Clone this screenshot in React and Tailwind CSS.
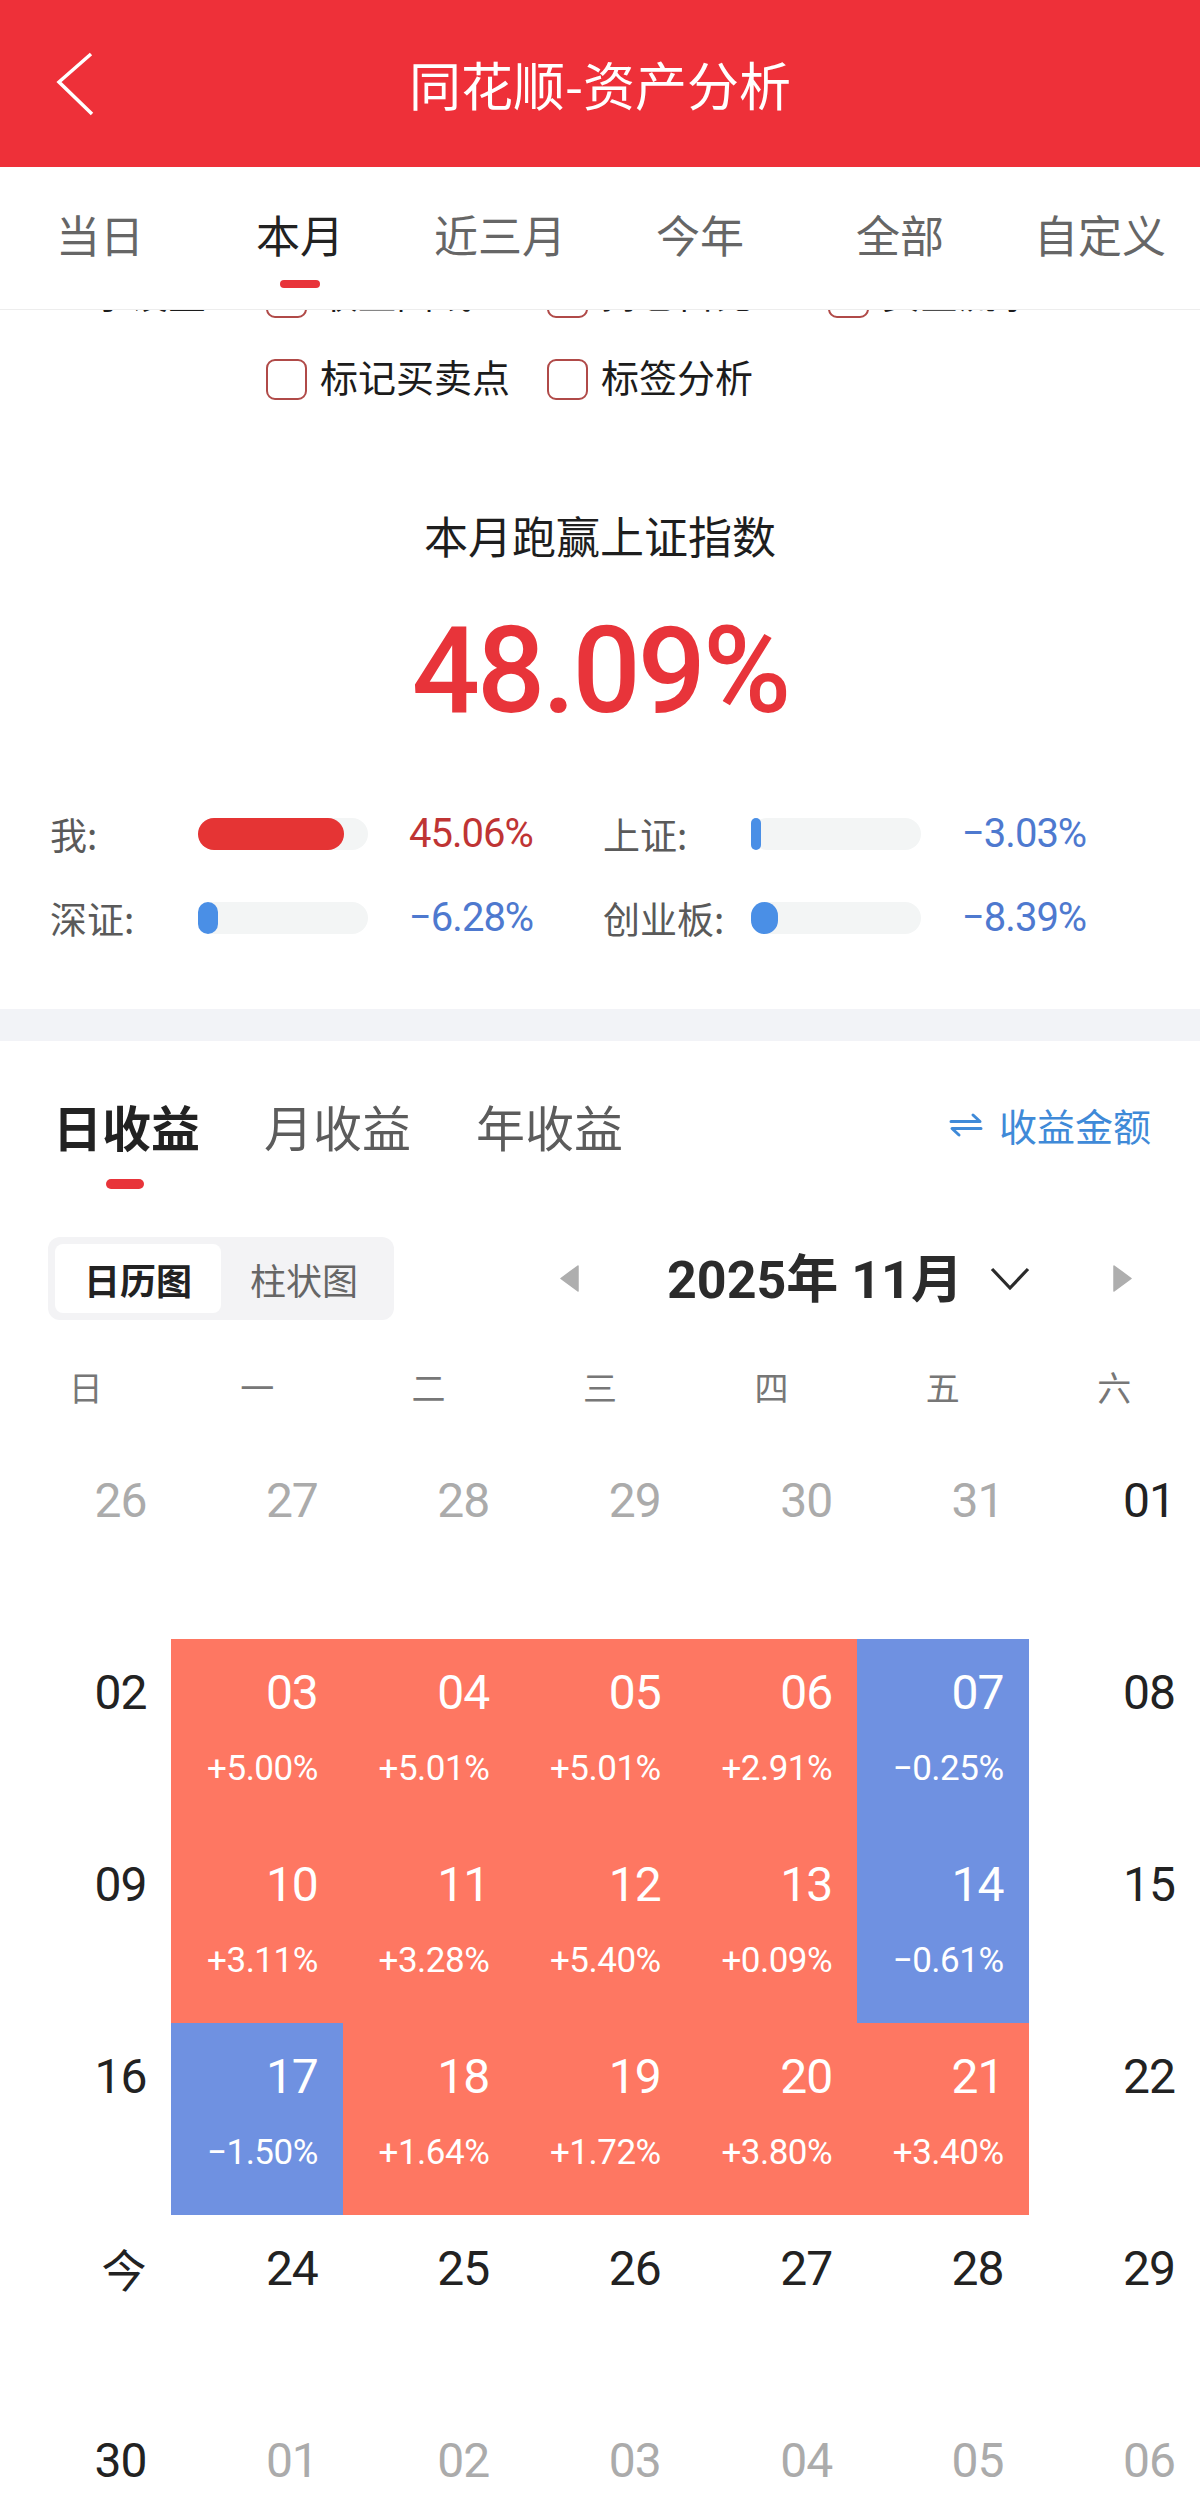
import React from "react";

const CJK = "font-['Noto_Sans_CJK_SC','Noto_Sans',sans-serif]";
const NUM = "font-['Roboto','Noto_Sans_CJK_SC',sans-serif]";

const tabs = ["当日", "本月", "近三月", "今年", "全部", "自定义"];

function Checkbox() {
  return <div className="w-[41px] h-[41px] shrink-0 rounded-[9px] border-2 border-[#B04A48] bg-white" />;
}

function CheckItem({ label, hidden }) {
  return (
    <div className={`flex gap-[13px] ${hidden ? "items-start" : "items-center"}`}>
      <Checkbox />
      <span className={`text-[38px] leading-[41px] text-[#1c1c1c] whitespace-nowrap ${hidden ? "-mt-[6px]" : "mb-[8px]"}`}>{label}</span>
    </div>
  );
}

function BarRow({ label, fill, fillColor, value, valueColor }) {
  return (
    <div className="flex items-center">
      <span className="w-[148px] text-[37px] leading-[44px] text-[#5a5a5a]">{label}</span>
      <div className="w-[170px] h-[32px] rounded-full bg-[#F3F5F5] flex">
        <div className={`h-full rounded-full ${fillColor}`} style={{ width: fill }} />
      </div>
      <span className={`ml-[41px] text-[40px] leading-[44px] tracking-[-1px] ${NUM} ${valueColor}`}>{value}</span>
    </div>
  );
}

const R = "red";
const B = "blue";
const weeks = [
  [["26", "o"], ["27", "o"], ["28", "o"], ["29", "o"], ["30", "o"], ["31", "o"], ["01", "d"]],
  [["02", "d"], ["03", R, "+5.00%"], ["04", R, "+5.01%"], ["05", R, "+5.01%"], ["06", R, "+2.91%"], ["07", B, "−0.25%"], ["08", "d"]],
  [["09", "d"], ["10", R, "+3.11%"], ["11", R, "+3.28%"], ["12", R, "+5.40%"], ["13", R, "+0.09%"], ["14", B, "−0.61%"], ["15", "d"]],
  [["16", "d"], ["17", B, "−1.50%"], ["18", R, "+1.64%"], ["19", R, "+1.72%"], ["20", R, "+3.80%"], ["21", R, "+3.40%"], ["22", "d"]],
  [["今", "t"], ["24", "d"], ["25", "d"], ["26", "d"], ["27", "d"], ["28", "d"], ["29", "d"]],
  [["30", "d"], ["01", "o"], ["02", "o"], ["03", "o"], ["04", "o"], ["05", "o"], ["06", "o"]],
];

function Cell({ day, kind, pct }) {
  const bg = kind === R ? "bg-[#FE7762]" : kind === B ? "bg-[#6F91E1]" : "bg-white";
  const colored = kind === R || kind === B;
  const color = colored ? "text-white" : kind === "o" ? "text-[#ABABAB]" : "text-[#222]";
  return (
    <div className={`h-[192px] flex flex-col items-end pr-[25px] pt-[26px] ${bg}`}>
      {kind === "t" ? (
        <span className={`text-[45px] leading-[56px] ${CJK} ${color}`}>{day}</span>
      ) : (
        <span className={`text-[48px] leading-[56px] tracking-[-1px] ${NUM} ${color}`}>{day}</span>
      )}
      {pct && (
        <span className={`mt-[28px] text-[35px] leading-[40px] tracking-[-0.5px] ${NUM} text-white`}>{pct}</span>
      )}
    </div>
  );
}

export default function App() {
  return (
    <div className={`w-[1200px] bg-white ${CJK}`}>
      {/* Header */}
      <div className="h-[167px] bg-[#EE3039] grid grid-cols-[1fr_auto_1fr] items-center">
        <div className="pl-[55px] flex items-center">
          <svg width="40" height="66" viewBox="0 0 40 66">
            <polyline points="36,3 4,31 37,63" fill="none" stroke="white" strokeWidth="3.5" strokeLinejoin="miter" />
          </svg>
        </div>
        <span className="text-white text-[52px] leading-[60px]">同花顺-资产分析</span>
        <div />
      </div>

      {/* Tabs */}
      <div className="h-[143px] border-b border-[#EDEDED] grid grid-cols-6">
        {tabs.map((t, i) => (
          <div key={t} className="flex flex-col items-center pt-[42px]">
            <span className={`text-[44px] leading-[50px] ${i === 1 ? "text-[#222]" : "text-[#666]"}`}>{t}</span>
            {i === 1 && <div className="mt-[21px] w-[40px] h-[8px] rounded-full bg-[#E8343A]" />}
          </div>
        ))}
      </div>

      {/* clipped row (scrolled under tab bar) */}
      <div className="h-[8px] overflow-hidden flex flex-col justify-end">
        <div className="h-[41px] shrink-0 pl-[54px] grid grid-cols-[212px_281px_281px_1fr] items-start">
          <span className="text-[38px] leading-[41px] text-[#1c1c1c] -mt-[6px]">显示设置：</span>
          <CheckItem label="收益曲线" hidden />
          <CheckItem label="持仓占比" hidden />
          <CheckItem label="资金流水" hidden />
        </div>
      </div>

      {/* checkbox row */}
      <div className="mt-[37px] h-[41px] pl-[54px] grid grid-cols-[212px_281px_281px_1fr] items-center">
        <div />
        <CheckItem label="标记买卖点" />
        <CheckItem label="标签分析" />
      </div>

      {/* Heading */}
      <div className="mt-[109px] text-center text-[44px] leading-[60px] text-[#1e1e1e]">本月跑赢上证指数</div>
      <div className={`mt-[46px] text-center text-[120px] leading-[120px] font-medium tracking-[-3px] text-[#E8343A] ${NUM}`}>48.09%</div>

      {/* Bars */}
      <div className="mt-[61px] px-[50px] grid grid-cols-[553px_1fr]">
        <div className="h-[84px] flex items-center">
          <BarRow label="我:" fill="146px" fillColor="bg-[#E53434]" value="45.06%" valueColor="text-[#BF3434]" />
        </div>
        <div className="h-[84px] flex items-center">
          <BarRow label="上证:" fill="10px" fillColor="bg-[#4A8FE6]" value="−3.03%" valueColor="text-[#4E79CF]" />
        </div>
        <div className="h-[84px] flex items-center">
          <BarRow label="深证:" fill="20px" fillColor="bg-[#4A8FE6]" value="−6.28%" valueColor="text-[#4E79CF]" />
        </div>
        <div className="h-[84px] flex items-center">
          <BarRow label="创业板:" fill="27px" fillColor="bg-[#4A8FE6]" value="−8.39%" valueColor="text-[#4E79CF]" />
        </div>
      </div>

      {/* gray band */}
      <div className="mt-[49px] h-[32px] bg-[#F2F3F7]" />

      {/* Section tabs */}
      <div className="pt-[55px] px-[53px]">
        <div className="h-[60px] flex items-center">
          <span className="text-[49px] leading-[60px] font-bold text-[#222]">日收益</span>
          <span className="ml-[64px] text-[49px] leading-[60px] text-[#5c5c5c]">月收益</span>
          <span className="ml-[65px] text-[49px] leading-[60px] text-[#5c5c5c]">年收益</span>
          <div className="ml-auto mr-[-4px] mb-[2px] flex items-center gap-[16px] text-[#3F8AD8]">
            <svg width="34" height="26" viewBox="0 0 34 26" fill="none" stroke="#3F8AD8" strokeWidth="3">
              <path d="M2 9.5 H31 L24 3" strokeLinecap="round" strokeLinejoin="round" />
              <path d="M32 16.5 H3 L10 23" strokeLinecap="round" strokeLinejoin="round" />
            </svg>
            <span className="text-[38px] leading-[44px]">收益金额</span>
          </div>
        </div>
        <div className="mt-[23px] ml-[53px] w-[38px] h-[10px] rounded-full bg-[#E8343A]" />
      </div>

      {/* Segmented + month nav */}
      <div className="mt-[48px] h-[83px] flex items-center pl-[48px]">
        <div className="w-[346px] h-[83px] p-[7px] rounded-[12px] bg-[#F3F3F5] flex">
          <div className="w-[166px] h-full bg-white rounded-[8px] flex items-center justify-center text-[36px] font-bold text-[#222]">日历图</div>
          <div className="w-[166px] h-full flex items-center justify-center text-[36px] text-[#666]">柱状图</div>
        </div>
        <svg className="ml-[166px]" width="19" height="27" viewBox="0 0 19 27">
          <polygon points="18,1 1,13.5 18,26" fill="#AEAEAE" stroke="#AEAEAE" strokeWidth="1.5" strokeLinejoin="round" />
        </svg>
        <span className={`ml-[88px] text-[52px] leading-[60px] font-bold text-[#2b2b2b] ${NUM}`}>
          2025<span className={CJK}>年</span> 11<span className={CJK}>月</span>
        </span>
        <svg className="ml-[27px]" width="40" height="24" viewBox="0 0 40 24">
          <polyline points="2,2 20,21 38,2" fill="none" stroke="#2b2b2b" strokeWidth="3.2" />
        </svg>
        <svg className="ml-[83px]" width="19" height="27" viewBox="0 0 19 27">
          <polygon points="1,1 18,13.5 1,26" fill="#AEAEAE" stroke="#AEAEAE" strokeWidth="1.5" strokeLinejoin="round" />
        </svg>
      </div>

      {/* Week header */}
      <div className="h-[127px] pt-[5px] grid grid-cols-7 items-center text-center text-[34px] text-[#777]">
        {["日", "一", "二", "三", "四", "五", "六"].map((d) => (
          <span key={d}>{d}</span>
        ))}
      </div>

      {/* Calendar */}
      <div className="grid grid-cols-7">
        {weeks.flat().map(([day, kind, pct], i) => (
          <Cell key={i} day={day} kind={kind} pct={pct} />
        ))}
      </div>
    </div>
  );
}
